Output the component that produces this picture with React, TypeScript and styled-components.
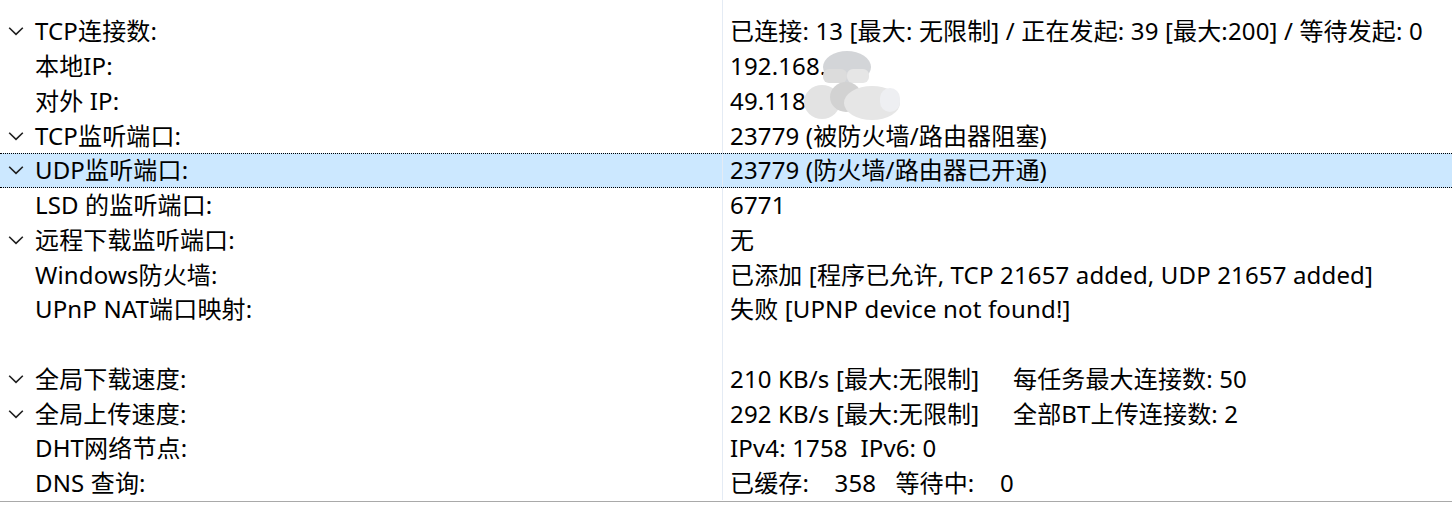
import React from 'react';
import styled, { createGlobalStyle } from 'styled-components';

const GlobalStyle = createGlobalStyle`
  html, body {
    margin: 0;
    padding: 0;
    background: #ffffff;
  }
  body {
    font-family: "Noto Sans", "Noto Sans CJK SC", sans-serif;
    color: #000000;
  }
`;

type StatRow = {
  label?: string;
  value?: React.ReactNode;
  expandable?: boolean;
  selected?: boolean;
  mask?: 'local' | 'public';
};

const Panel = styled.div`
  width: 1452px;
  height: 508px;
  box-sizing: border-box;
  padding-top: 14px;
  background: linear-gradient(
    to right,
    transparent 722px,
    #e4ebf4 722px,
    #e4ebf4 723px,
    transparent 723px
  );
  background-size: 100% 487px;
  background-repeat: no-repeat;
  overflow: hidden;
`;

const List = styled.div`
  display: flex;
  flex-direction: column;
  border-bottom: 1px solid #a9a9a9;
`;

const Row = styled.div<{ $selected?: boolean }>`
  display: grid;
  grid-template-columns: 723px 1fr;
  height: 34.75px;
  box-sizing: border-box;
  align-items: center;
  font-size: 24px;
  line-height: 1;
  letter-spacing: 0.15px;
  white-space: pre;
  background: ${(p) => (p.$selected ? '#cce8ff' : 'transparent')};
  border-top: 1px dotted ${(p) => (p.$selected ? '#000' : 'transparent')};
  border-bottom: 1px dotted ${(p) => (p.$selected ? '#000' : 'transparent')};
`;

const LabelCell = styled.div`
  display: flex;
  align-items: center;
  height: 100%;
  box-sizing: border-box;
  border-right: 1px solid #e4ebf4;
`;

const Toggle = styled.span`
  display: flex;
  align-items: center;
  justify-content: center;
  width: 31px;
  margin-right: 4px;
  flex: none;
  color: #1f1f1f;
`;

const ValueCell = styled.div`
  position: relative;
  display: flex;
  align-items: center;
  height: 100%;
  padding-left: 7px;
`;

const Col = styled.span<{ $w: number }>`
  display: inline-block;
  width: ${(p) => p.$w}px;
`;

const MaskLayer = styled.svg`
  position: absolute;
  left: 7px;
  top: -3px;
  overflow: visible;
  pointer-events: none;
`;

function Chevron() {
  return (
    <svg width="16" height="10" viewBox="0 0 16 10">
      <path d="M1.2 1.8 L8 8.4 L14.8 1.8" fill="none" stroke="currentColor" strokeWidth="1.6" />
    </svg>
  );
}

function Blur({ kind }: { kind: 'local' | 'public' }) {
  return (
    <MaskLayer width="200" height="40" viewBox="0 0 200 40">
      {kind === 'local' ? (
        <>
          <ellipse cx="117" cy="20" rx="24" ry="16" fill="#d3d5d8" />
          <rect x="93" y="22" width="24" height="14" rx="6" fill="#dcdcdc" />
          <rect x="117" y="22" width="22" height="14" rx="6" fill="#e6e6e6" />
        </>
      ) : (
        <>
          <ellipse cx="92" cy="20" rx="18" ry="17" fill="#e3e3e3" />
          <ellipse cx="116" cy="15" rx="16" ry="15" fill="#d2d2d2" />
          <ellipse cx="142" cy="21" rx="28" ry="17" fill="#e6e6e6" />
          <rect x="150" y="6" width="20" height="24" rx="10" fill="#eeeff2" />
        </>
      )}
    </MaskLayer>
  );
}

const rows: StatRow[] = [
  { label: 'TCP连接数:', value: '已连接: 13 [最大: 无限制] / 正在发起: 39 [最大:200] / 等待发起: 0', expandable: true },
  { label: '本地IP:', value: '192.168.', mask: 'local' },
  { label: '对外 IP:', value: '49.118', mask: 'public' },
  { label: 'TCP监听端口:', value: '23779 (被防火墙/路由器阻塞)', expandable: true },
  { label: 'UDP监听端口:', value: '23779 (防火墙/路由器已开通)', expandable: true, selected: true },
  { label: 'LSD 的监听端口:', value: '6771' },
  { label: '远程下载监听端口:', value: '无', expandable: true },
  { label: 'Windows防火墙:', value: '已添加 [程序已允许, TCP 21657 added, UDP 21657 added]' },
  { label: 'UPnP NAT端口映射:', value: '失败 [UPNP device not found!]' },
  {},
  {
    label: '全局下载速度:',
    value: (
      <>
        <Col $w={283}>210 KB/s [最大:无限制]</Col>每任务最大连接数: 50
      </>
    ),
    expandable: true,
  },
  {
    label: '全局上传速度:',
    value: (
      <>
        <Col $w={283}>292 KB/s [最大:无限制]</Col>全部BT上传连接数: 2
      </>
    ),
    expandable: true,
  },
  { label: 'DHT网络节点:', value: 'IPv4: 1758  IPv6: 0' },
  { label: 'DNS 查询:', value: '已缓存:    358   等待中:    0' },
];

export default function App() {
  return (
    <>
      <GlobalStyle />
      <Panel>
        <List>
          {rows.map((r, i) => (
            <Row key={i} $selected={r.selected}>
              <LabelCell>
                <Toggle>{r.expandable && <Chevron />}</Toggle>
                {r.label}
              </LabelCell>
              <ValueCell>
                {r.value}
                {r.mask && <Blur kind={r.mask} />}
              </ValueCell>
            </Row>
          ))}
        </List>
      </Panel>
    </>
  );
}
